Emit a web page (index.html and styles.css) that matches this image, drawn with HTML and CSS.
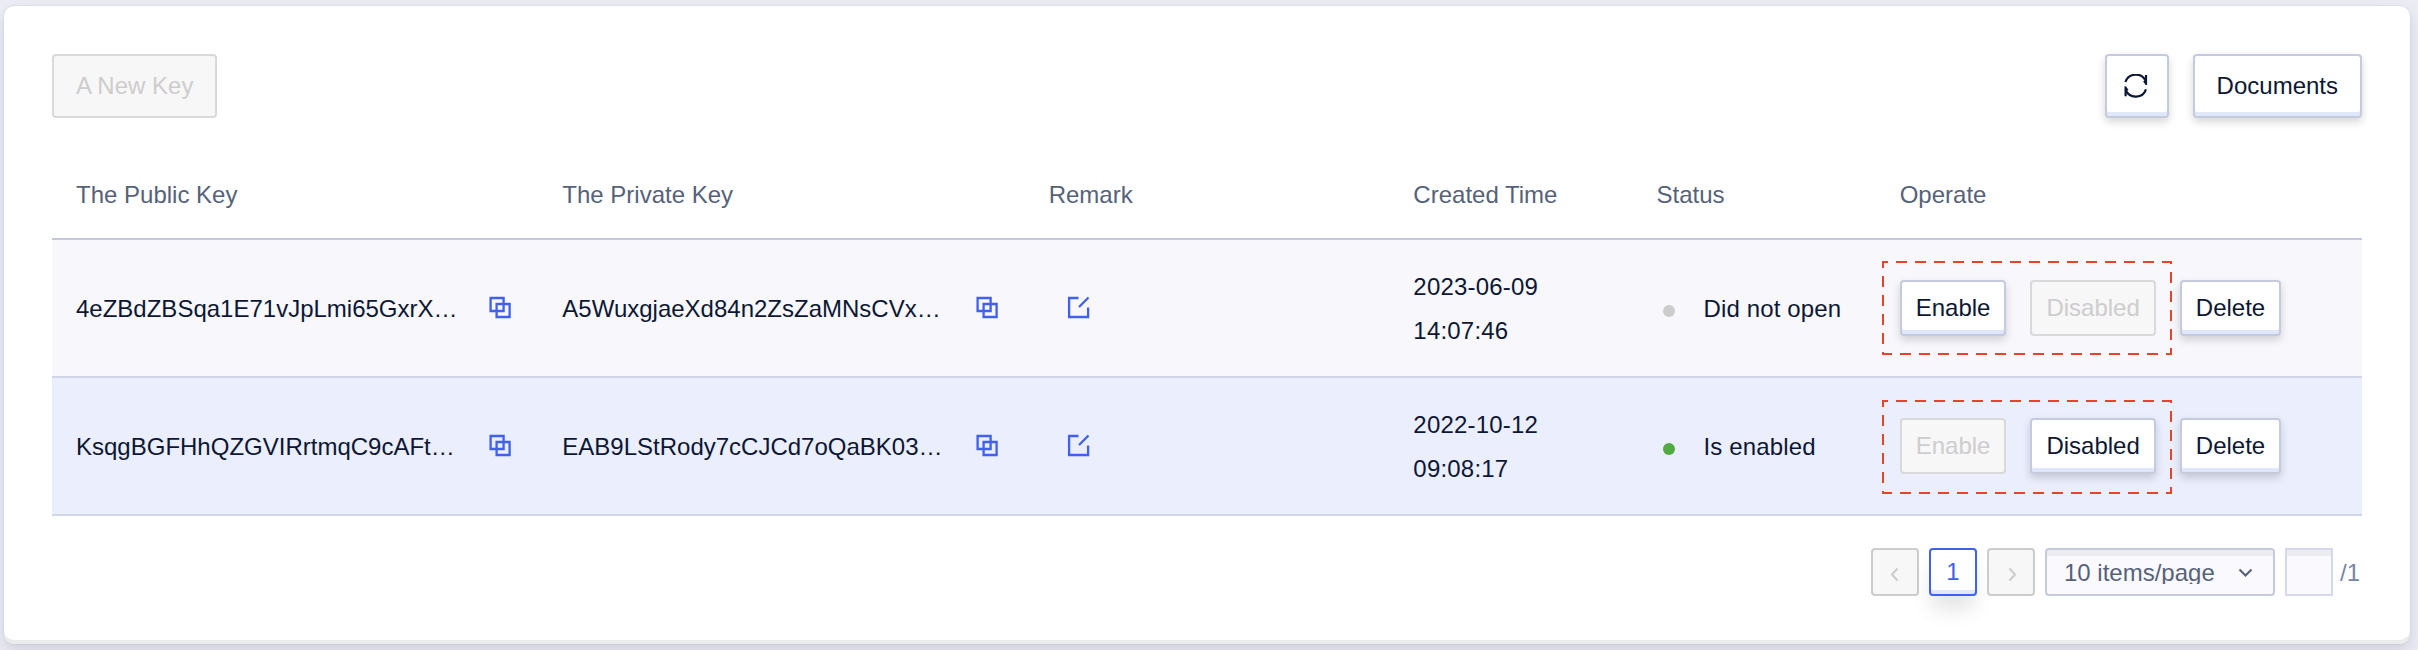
FILE: index.html
```html
<!DOCTYPE html>
<html lang="en">
<head>
<meta charset="utf-8">
<title>API Keys</title>
<link rel="stylesheet" href="styles.css">
</head>
<body>
<svg class="sprite" width="0" height="0" aria-hidden="true">
  <symbol id="copy" viewBox="0 0 24 24"><path d="M2.6 2h13v13h-13zM8.6 8h13v13h-13z" fill="none" stroke="currentColor" stroke-width="2.3"/></symbol>
  <symbol id="edit" viewBox="0 0 24 24"><path d="M11.5 2H2.1v19h19v-9.5M12 11L21.5 1.5" fill="none" stroke="currentColor" stroke-width="2.3"/></symbol>
  <symbol id="marquee" viewBox="0 0 290 94"><rect x="1" y="1" width="288" height="92" fill="none" stroke="currentColor" stroke-width="2" stroke-dasharray="11 8" stroke-dashoffset="-13"/></symbol>
</svg>
<main class="card">
  <header class="toolbar">
    <button class="btn btn-large" disabled>A New Key</button>
    <div class="toolbar-actions">
      <button class="btn btn-large btn-square" aria-label="Refresh">
        <svg class="icon" viewBox="0 0 24 24"><path d="M1.4 8A11 11 0 0 1 21.6 6.8M22 15.3A11 11 0 0 1 1.8 16.6" fill="none" stroke="currentColor" stroke-width="2.2"/><path d="M20.9 1h2.2v10h-1.4l-2.6-3.6 1.8-1zM2.7 22.3H.5v-10h1.4l2.6 3.6-1.8 1z" fill="currentColor"/></svg>
      </button>
      <button class="btn btn-large">Documents</button>
    </div>
  </header>

  <section class="table">
    <div class="row head">
      <div class="cell">The Public Key</div>
      <div class="cell">The Private Key</div>
      <div class="cell">Remark</div>
      <div class="cell">Created Time</div>
      <div class="cell">Status</div>
      <div class="cell">Operate</div>
    </div>
    <div class="row">
      <div class="cell key"><span>4eZBdZBSqa1E71vJpLmi65GxrX…</span><svg class="icon link"><use href="#copy"/></svg></div>
      <div class="cell key"><span>A5WuxgjaeXd84n2ZsZaMNsCVx…</span><svg class="icon link"><use href="#copy"/></svg></div>
      <div class="cell remark"><svg class="icon link"><use href="#edit"/></svg></div>
      <div class="cell time"><div>2023-06-09<br>14:07:46</div></div>
      <div class="cell status"><i class="dot"></i><span>Did not open</span></div>
      <div class="cell operate">
        <div class="toggle">
          <button class="btn">Enable</button><button class="btn" disabled>Disabled</button>
          <svg class="marquee"><use href="#marquee"/></svg>
        </div>
        <button class="btn">Delete</button>
      </div>
    </div>
    <div class="row active">
      <div class="cell key"><span>KsqgBGFHhQZGVIRrtmqC9cAFt…</span><svg class="icon link"><use href="#copy"/></svg></div>
      <div class="cell key"><span>EAB9LStRody7cCJCd7oQaBK03…</span><svg class="icon link"><use href="#copy"/></svg></div>
      <div class="cell remark"><svg class="icon link"><use href="#edit"/></svg></div>
      <div class="cell time"><div>2022-10-12<br>09:08:17</div></div>
      <div class="cell status"><i class="dot dot-on"></i><span>Is enabled</span></div>
      <div class="cell operate">
        <div class="toggle">
          <button class="btn" disabled>Enable</button><button class="btn">Disabled</button>
          <svg class="marquee"><use href="#marquee"/></svg>
        </div>
        <button class="btn">Delete</button>
      </div>
    </div>
  </section>

  <nav class="pager">
    <button class="page" disabled aria-label="Previous"><svg class="arrow" viewBox="0 0 16 16"><path d="M10.5 4.5L5 10.5l5.5 6" fill="none" stroke="currentColor" stroke-width="2"/></svg></button>
    <button class="page current">1</button>
    <button class="page" disabled aria-label="Next"><svg class="arrow" viewBox="0 0 16 16"><path d="M6.5 4.5l5.5 6-5.5 6" fill="none" stroke="currentColor" stroke-width="2"/></svg></button>
    <div class="select"><span>10 items/page</span><svg class="arrow" viewBox="0 0 16 16"><path d="M2.5 5.5l6 6 6-6" fill="none" stroke="currentColor" stroke-width="2.2"/></svg></div>
    <input class="jump" aria-label="Page">
    <span class="total">/1</span>
  </nav>
</main>
</body>
</html>
```
FILE: styles.css
```css
* { box-sizing: border-box; }

body {
  margin: 0;
  height: 650px;
  padding: 6px 8px 6px 4px;
  overflow: hidden;
  background: #ececf5;
  color: #0d1733;
  font: 24px/44px "Liberation Sans", Arial, sans-serif;
}

.sprite { position: absolute; }

.card {
  height: 638px;
  padding: 48px;
  border-radius: 10px;
  background: #fff;
  box-shadow: inset 0 -4px #ebebeb, 0 0 2px rgba(40, 50, 80, .16), 0 8px 16px rgba(40, 50, 80, .14);
}

.toolbar, .toolbar-actions { display: flex; gap: 24px; }
.toolbar { justify-content: space-between; }

.btn {
  height: 56px;
  padding: 0 14px 1px;
  border: 2px solid #c5cadc;
  border-radius: 4px;
  background: #fff;
  box-shadow: inset 0 -4px #e1e7fb, 0 4px 8px rgba(0, 0, 0, .16);
  color: #0d1733;
  font: inherit;
  line-height: 51px;
}
.btn:disabled {
  border-color: #d9d9d9;
  background: #f7f7f7;
  box-shadow: none;
  color: #cdcdcd;
}
.btn-large { height: 64px; padding: 0 22px; line-height: 60px; }
.btn-square { display: flex; align-items: center; justify-content: center; width: 64px; padding: 0 1px 1px 0; }

.icon { display: block; flex: none; width: 24px; height: 24px; }
.link { color: #4060ee; }

.table { margin-top: 32px; }
.row {
  display: grid;
  grid-template-columns: 4fr 4fr 3fr 2fr 2fr 4fr;
  height: 138px;
  border-bottom: 2px solid #d1d5e8;
  background: #f7f7fc;
}
.head { height: 90px; border-color: #c5c8dc; background: #fff; color: #56627a; }
.active { background: #eaeefd; }
.cell { display: flex; align-items: center; min-width: 0; padding: 0 24px; white-space: nowrap; }
.head .cell { padding-top: 2px; }
.key { justify-content: space-between; padding-right: 26px; }
.key span, .status span { padding-top: 2px; }
.time { padding-top: 1px; letter-spacing: .2px; }
.status { letter-spacing: .14px; }
.remark { padding-left: 42px; }

.dot { width: 12px; height: 12px; margin: 6px 29px 0 6px; border-radius: 50%; background: #ccc; }
.dot-on { background: #52ab41; }

.operate { gap: 24px; }
.toggle { position: relative; display: flex; gap: 24px; }
.marquee { position: absolute; left: -18px; top: -19px; width: 290px; height: 94px; color: #ea4228; pointer-events: none; }
.active .marquee { top: -18px; }

.pager { display: flex; justify-content: flex-end; gap: 10px; margin-top: 32px; }
.page {
  display: flex;
  align-items: center;
  justify-content: center;
  width: 48px;
  height: 48px;
  padding: 0;
  border: 2px solid #ccc;
  border-radius: 4px;
  background: #f7f7f7;
  color: #ccc;
  font: inherit;
}
.current {
  border-color: #4060ee;
  background: #fff;
  color: #4060ee;
  box-shadow: inset 0 -4px #e1e7fb, 0 16px 20px -2px rgba(0, 0, 0, .1);
}
.arrow { width: 16px; height: 16px; overflow: visible; }
.select {
  display: flex;
  align-items: center;
  justify-content: space-between;
  width: 230px;
  height: 48px;
  padding: 0 20px 0 17px;
  border: 2px solid #c5cadc;
  border-radius: 4px;
  background: #fafafe;
  box-shadow: inset 0 6px #ececef;
  color: #56627a;
}
.select span { height: 24px; overflow: hidden; line-height: 25px; }
.jump {
  width: 48px;
  height: 48px;
  border: 2px solid #d5d8ec;
  background: #fafafe;
  box-shadow: inset 0 6px #ececef;
}
.total { width: 22px; margin-left: -3px; color: #7886a8; line-height: 49px; }
```
